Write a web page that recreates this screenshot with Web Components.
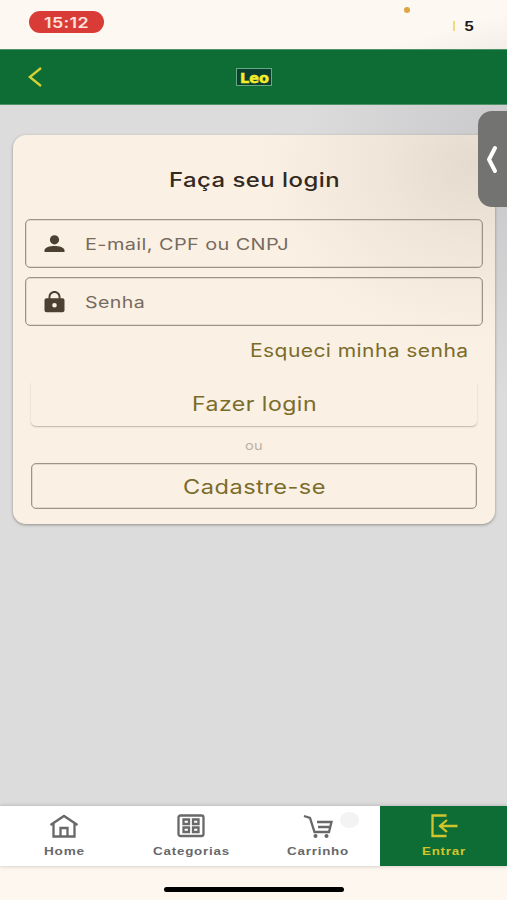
<!DOCTYPE html>
<html lang="pt-BR">
<head>
<meta charset="utf-8">
<meta name="viewport" content="width=device-width, initial-scale=1">
<title>Leo - Login</title>
<style>
  html, body { margin: 0; height: 100%; }
  body { font-family: Inter, "Liberation Sans", sans-serif; background: #dcdcdd; overflow: hidden; }
</style>
</head>
<body>
<login-app></login-app>

<script>
(function () {
  // Single line of text, set to an exact width.
  // Usage: <wide-text w="170" size="19.5" weight="500">...</wide-text>
  class WideText extends HTMLElement {
    connectedCallback() {
      const root = this.attachShadow({ mode: 'open' });
      const w = +this.getAttribute('w');
      root.innerHTML = `
        <style>
          :host{ display:block; flex:none; width:${w}px; height:1.3em; line-height:1.3em;
                 font-size:${this.getAttribute('size')}px; font-weight:${this.getAttribute('weight') || 400};
                 letter-spacing:${this.getAttribute('track') || '.02em'}; white-space:nowrap; }
          span{ display:inline-block; transform-origin:0 50%; }
        </style>
        <span><slot></slot></span>`;
      const span = root.querySelector('span');
      const natural = span.getBoundingClientRect().width;
      if (natural) span.style.transform = `scaleX(${w / natural})`;
    }
  }

  class StatusBar extends HTMLElement {
    connectedCallback() {
      this.attachShadow({ mode: 'open' }).innerHTML = `
        <style>
          :host{ display:flex; justify-content:space-between; box-sizing:border-box; height:49px;
                 padding:11px 33px 0 29px;
                 background:linear-gradient(165deg, transparent 65%, #f3eee8 100%) right/200px 100% no-repeat, #fdf8f2; }
          .time{ display:flex; align-items:center; justify-content:center; box-sizing:border-box;
                 width:75px; height:22px; padding-top:1px;
                 border-radius:11px; background:#d93c36; color:#fde3dc; }
          .right{ display:flex; align-items:flex-start; color:#1c1b1a; }
          .dot{ width:6px; height:6px; border-radius:50%; background:#dda544; margin:-4px 43px 0 0; }
          .bar{ width:2px; height:10px; background:#f0dc7c; margin:10px 9px 0 0; }
          .num{ margin-top:8px; }
        </style>
        <div class="time"><wide-text w="45" size="15" weight="600">15:12</wide-text></div>
        <div class="right">
          <div class="dot"></div><div class="bar"></div>
          <div class="num"><wide-text w="10" size="12.5" weight="700" track="0">5</wide-text></div>
        </div>`;
    }
  }

  class AppHeader extends HTMLElement {
    connectedCallback() {
      this.attachShadow({ mode: 'open' }).innerHTML = `
        <style>
          :host{ display:grid; grid-template-columns:1fr auto 1fr; align-items:center; box-sizing:border-box;
                 height:56px; padding-left:28px; background:#0d6d34;
                 border-top:1px solid #4f9268; border-bottom:1px solid #4f9268; }
          svg{ display:block; }
          .logo{ display:flex; align-items:center; justify-content:center; box-sizing:border-box;
                 width:36px; height:18px; margin-left:-27px; padding-top:2px;
                 border:1px solid #66aa84; background:#0b4030; color:#f3ee2b;
                 font-family:"DejaVu Sans", sans-serif; -webkit-text-stroke:.5px #f3ee2b; }
        </style>
        <svg width="14" height="20" viewBox="0 0 14 20" fill="none" stroke="#d3d234" stroke-width="2.3">
          <path d="M13 1 1.8 10 13 19"/>
        </svg>
        <div class="logo"><wide-text w="29" size="14" weight="700" track="0">Leo</wide-text></div>`;
    }
  }

  const FIELD_ICONS = {
    person: '<circle cx="10.5" cy="4.8" r="4.6"/><path d="M.5 17v-1.500c0-3.100 5.400-4.400 10-4.400s10 1.300 10 4.400V17z"/>',
    lock: `<path fill-rule="evenodd" d="M2.600 7.300h1.900V6c0-3.400 2.600-5.900 6-5.900s6 2.500 6 5.900v1.300h1.900c1.200 0 2.100.9 2.100 2v10c0 1.100-.9 2-2.100 2H2.600c-1.200 0-2.100-.9-2.100-2v-10c0-1.100.9-2 2.100-2zM6.400 7.300h8.200V6c0-2.300-1.800-4-4.100-4S6.400 3.700 6.400 6zM10.500 12a2.300 2.300 0 1 0 0 4.600 2.300 2.300 0 0 0 0-4.600z"/>`,
  };

  class TextField extends HTMLElement {
    connectedCallback() {
      const icon = this.getAttribute('icon');
      this.attachShadow({ mode: 'open' }).innerHTML = `
        <style>
          :host{ display:flex; align-items:center; gap:20px; box-sizing:border-box; height:49px;
                 padding-left:18px; border:1px solid #9d9488; border-radius:5px; color:#756b5f;
                 box-shadow:inset 0 0 0 .5px rgba(157,148,136,.5); }
          svg{ display:block; fill:#4b4032; }
          ::slotted(*){ margin-top:2px; }
        </style>
        <svg width="21" height="${icon === 'lock' ? 22 : 17}" viewBox="0 0 21 ${icon === 'lock' ? 22 : 17}">${FIELD_ICONS[icon]}</svg>
        <slot></slot>`;
    }
  }

  class AppButton extends HTMLElement {
    connectedCallback() {
      this.attachShadow({ mode: 'open' }).innerHTML = `
        <style>
          :host{ display:flex; align-items:center; justify-content:center; box-sizing:border-box;
                 height:46px; border-radius:5px; color:#7a6c2a; }
          :host([variant="outlined"]){ border:1px solid #9d9488; box-shadow:inset 0 0 0 .5px rgba(157,148,136,.5); }
          :host([variant="elevated"]){ background:#fbf0e4; box-shadow:0 1px 1.500px rgba(90,75,55,.36);
                 clip-path:inset(3px -4px -4px -4px); }
          ::slotted(*){ margin-top:3px; }
        </style>
        <slot></slot>`;
    }
  }

  class LoginCard extends HTMLElement {
    connectedCallback() {
      this.attachShadow({ mode: 'open' }).innerHTML = `
        <style>
          :host{ display:flex; flex-direction:column; box-sizing:border-box; height:389px;
                 margin:30px 12px 0 13px; padding:33px 12px 0; border-radius:13px;
                 background:radial-gradient(ellipse 215px 175px at 96% 8%, #e4dacd 0%, rgba(236,226,213,.75) 45%, rgba(251,240,228,0) 100%), #fbf0e4;
                 box-shadow:0 1px 3px rgba(70,65,60,.5); color:#33291e; }
          .title{ align-self:center; margin-bottom:26px; }
          text-field{ flex:none; margin-bottom:9px; }
          .forgot{ display:flex; justify-content:flex-end; padding-right:14.5px; margin-top:4px; color:#7a6c2a; }
          .actions{ display:flex; flex-direction:column; margin:17.5px 6px 0; }
          .or{ display:flex; justify-content:center; align-items:center; box-sizing:border-box;
               height:36.5px; padding-top:2px; color:#bab0a5; }
        </style>
        <wide-text class="title" w="171" size="19.5" weight="500">Faça seu login</wide-text>
        <text-field icon="person"><wide-text w="204" size="16">E-mail, CPF ou CNPJ</wide-text></text-field>
        <text-field icon="lock"><wide-text w="60" size="16">Senha</wide-text></text-field>
        <div class="forgot"><wide-text w="218.5" size="18">Esqueci minha senha</wide-text></div>
        <div class="actions">
          <app-button variant="elevated"><wide-text w="125" size="19.5">Fazer login</wide-text></app-button>
          <div class="or"><wide-text w="18" size="12">ou</wide-text></div>
          <app-button variant="outlined"><wide-text w="143" size="19.5">Cadastre-se</wide-text></app-button>
        </div>`;
    }
  }

  const NAV_ICONS = {
    home: '<path d="M1.500 11 15 2 28.500 11M4.500 9V22.500H25.500V9M11.500 22V14H18.500V22"/>',
    grid: '<rect x="2.500" y="1.500" width="25" height="20.500" rx="2"/><path d="M7.500 5.500h5.500v4.500H7.500zM17 5.500h5.500v4.500H17zM7.500 13.500h5.500v4.500H7.500zM17 13.500h5.500v4.500H17z"/>',
    cart: '<path d="M1 2 7 4 11.500 18H26L28.500 8H14M15 13H26.500"/><circle cx="12.500" cy="22" r="1.300" fill="currentColor" stroke-width="1.500"/><circle cx="23.500" cy="22" r="1.300" fill="currentColor" stroke-width="1.500"/>',
    enter: '<path d="M17.500 1.500H3.500V22H17.500M28.500 12H11M18 6 11 12 18 18"/>',
  };

  class NavItem extends HTMLElement {
    connectedCallback() {
      this.attachShadow({ mode: 'open' }).innerHTML = `
        <style>
          :host{ display:flex; flex-direction:column; align-items:center; box-sizing:border-box;
                 position:relative; padding:8px 0 0 2px; gap:5px; color:#68686a;
                 font-family:"Liberation Sans", Arial, sans-serif; }
          :host([active]){ background:#0d6d34; color:#d2c52c; padding-left:0; }
          svg{ display:block; fill:none; stroke:currentColor; stroke-width:2.3; }
          .badge{ position:absolute; left:calc(50% + 23px); top:6px; width:19px; height:16px;
                  border-radius:50%; background:#f3f3f3; }
        </style>
        <svg width="30" height="25" viewBox="0 0 30 25">${NAV_ICONS[this.getAttribute('icon')]}</svg>
        ${this.hasAttribute('badge') ? '<span class="badge"></span>' : ''}
        <slot></slot>`;
    }
  }

  class BottomNav extends HTMLElement {
    connectedCallback() {
      this.attachShadow({ mode: 'open' }).innerHTML = `
        <style>
          :host{ display:block; height:94px; background:#fdf7f0; }
          nav{ display:grid; grid-template-columns:repeat(4, 1fr); height:60px; background:#fff;
               box-shadow:0 0 4px rgba(60,60,60,.3); }
          .home-bar{ width:180px; height:5px; margin:21px auto 0; border-radius:3px; background:#000; }
        </style>
        <nav>
          <nav-item icon="home"><wide-text w="41" size="11.5" weight="700" track=".06em">Home</wide-text></nav-item>
          <nav-item icon="grid"><wide-text w="77" size="11.5" weight="700" track=".06em">Categorias</wide-text></nav-item>
          <nav-item icon="cart" badge><wide-text w="62" size="11.5" weight="700" track=".06em">Carrinho</wide-text></nav-item>
          <nav-item icon="enter" active><wide-text w="44" size="11.5" weight="700" track=".06em">Entrar</wide-text></nav-item>
        </nav>
        <div class="home-bar"></div>`;
    }
  }

  // Pull tab that floats over the right edge of the screen.
  class SideHandle extends HTMLElement {
    connectedCallback() {
      this.attachShadow({ mode: 'open' }).innerHTML = `
        <style>
          :host{ position:absolute; right:0; top:111px; display:flex; align-items:center; box-sizing:border-box;
                 width:29px; height:96px; padding-left:7px; border-radius:14px 0 0 14px; background:#737372; }
        </style>
        <svg width="13" height="29" viewBox="0 0 13 29" fill="none" stroke="#fff" stroke-width="4"
             stroke-linecap="round" stroke-linejoin="round"><path d="M10 3 4 14.500 10 26"/></svg>`;
    }
  }

  class LoginApp extends HTMLElement {
    connectedCallback() {
      this.attachShadow({ mode: 'open' }).innerHTML = `
        <style>
          :host{ display:flex; flex-direction:column; position:relative; width:507px; height:900px;
                 overflow:hidden; background:#dcdcdd; }
          main{ display:flow-root; flex:1;
                background:radial-gradient(ellipse 210px 230px at 100% 60px, rgba(180,180,183,.5), transparent) no-repeat; }
        </style>
        <status-bar></status-bar>
        <app-header></app-header>
        <main><login-card></login-card></main>
        <bottom-nav></bottom-nav>
        <side-handle></side-handle>`;
    }
  }

  customElements.define('wide-text', WideText);
  customElements.define('status-bar', StatusBar);
  customElements.define('app-header', AppHeader);
  customElements.define('text-field', TextField);
  customElements.define('app-button', AppButton);
  customElements.define('login-card', LoginCard);
  customElements.define('nav-item', NavItem);
  customElements.define('bottom-nav', BottomNav);
  customElements.define('side-handle', SideHandle);
  customElements.define('login-app', LoginApp);
})();
</script>
</body>
</html>
